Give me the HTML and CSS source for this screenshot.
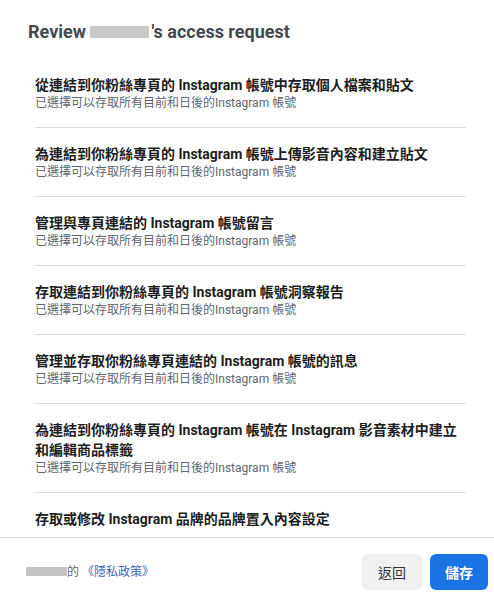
FILE: index.html
```html
<!DOCTYPE html>
<html lang="zh-Hant">
<head>
<meta charset="utf-8">
<title>Review access request</title>
<link rel="stylesheet" href="styles.css">
</head>
<body>
<div class="dialog">
  <header class="header">
    <h1 class="title">Review <span class="redact redact-name"></span>'s access request</h1>
  </header>
  <div class="scroll">
    <ul class="perm-list">
      <li class="perm">
        <div class="perm-title">從連結到你粉絲專頁的 Instagram 帳號中存取個人檔案和貼文</div>
        <div class="perm-sub">已選擇可以存取所有目前和日後的Instagram 帳號</div>
      </li>
      <li class="perm">
        <div class="perm-title">為連結到你粉絲專頁的 Instagram 帳號上傳影音內容和建立貼文</div>
        <div class="perm-sub">已選擇可以存取所有目前和日後的Instagram 帳號</div>
      </li>
      <li class="perm">
        <div class="perm-title">管理與專頁連結的 Instagram 帳號留言</div>
        <div class="perm-sub">已選擇可以存取所有目前和日後的Instagram 帳號</div>
      </li>
      <li class="perm">
        <div class="perm-title">存取連結到你粉絲專頁的 Instagram 帳號洞察報告</div>
        <div class="perm-sub">已選擇可以存取所有目前和日後的Instagram 帳號</div>
      </li>
      <li class="perm">
        <div class="perm-title">管理並存取你粉絲專頁連結的 Instagram 帳號的訊息</div>
        <div class="perm-sub">已選擇可以存取所有目前和日後的Instagram 帳號</div>
      </li>
      <li class="perm">
        <div class="perm-title">為連結到你粉絲專頁的 Instagram 帳號在 Instagram 影音素材中建立和編輯商品標籤</div>
        <div class="perm-sub">已選擇可以存取所有目前和日後的Instagram 帳號</div>
      </li>
      <li class="perm">
        <div class="perm-title">存取或修改 Instagram 品牌的品牌置入內容設定</div>
      </li>
    </ul>
  </div>
  <footer class="footer">
    <div class="policy"><span class="redact redact-app"></span>的 <a class="policy-link" href="#">《隱私政策》</a></div>
    <div class="actions">
      <button class="btn btn-secondary" type="button">返回</button>
      <button class="btn btn-primary" type="button">儲存</button>
    </div>
  </footer>
</div>
</body>
</html>
```
FILE: styles.css
```css
* { box-sizing: border-box; }
html, body { margin: 0; padding: 0; background: #fff; }
body {
  font-family: Roboto, "Noto Sans CJK TC", "Noto Sans", sans-serif;
  color: #1c1e21;
  width: 494px;
  height: 599px;
  overflow: hidden;
}
.dialog {
  display: flex;
  flex-direction: column;
  height: 599px;
}
.header { padding: 20px 28px 15px; }
.title {
  margin: 0;
  font-size: 18px;
  line-height: 24px;
  font-weight: 700;
  color: #444950;
}
.redact {
  display: inline-block;
  background: #c9c9c9;
  vertical-align: baseline;
}
.redact-name { width: 59px; height: 12px; margin-right: 2px; }
.scroll {
  flex: 1;
  overflow: hidden;
  padding: 0 28px 0 35px;
}
.perm-list { list-style: none; margin: 0; padding: 0; }
.perm {
  padding: 16px 0;
  border-bottom: 1px solid #dadde1;
}
.perm-title {
  font-size: 14px;
  line-height: 20px;
  font-weight: 700;
  color: #1c1e21;
}
.perm-sub {
  font-size: 12px;
  line-height: 16px;
  color: #606770;
}
.footer {
  border-top: 1px solid #dadde1;
  height: 62px;
  padding: 16px 6px 0 26px;
  display: flex;
  justify-content: space-between;
  align-items: flex-start;
}
.policy {
  font-size: 12px;
  line-height: 36px;
  color: #606770;
}
.redact-app { width: 41px; height: 9px; background: #c4c4c4; }
.policy-link { color: #4267b2; text-decoration: none; }
.actions { display: flex; gap: 8px; }
.btn {
  height: 36px;
  border: none;
  border-radius: 6px;
  padding: 0 16px;
  font-family: inherit;
  font-size: 14px;
  white-space: nowrap;
}
.btn-secondary { background: #f0f0f0; color: #333; padding: 0 16px; }
.btn-primary { background: #1b74e4; color: #fff; font-weight: 700; padding: 0 15px; }
```
